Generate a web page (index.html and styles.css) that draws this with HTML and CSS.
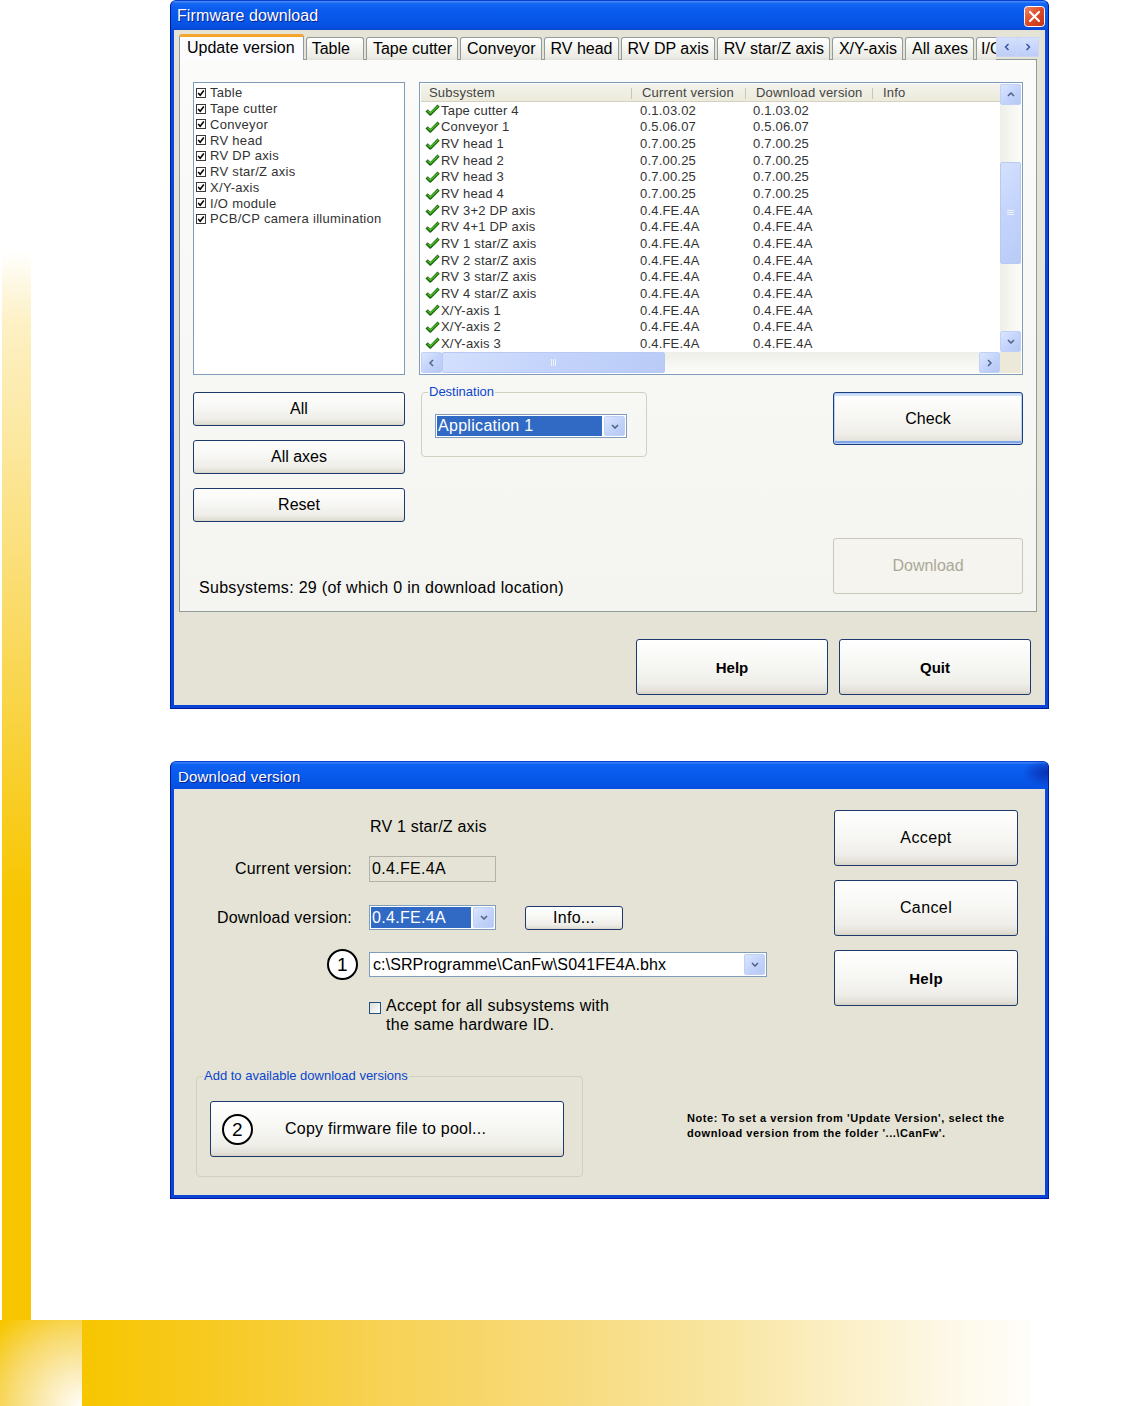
FILE: index.html
```html
<!DOCTYPE html>
<html>
<head>
<meta charset="utf-8">
<title>Firmware download</title>
<link rel="stylesheet" href="styles.css">
</head>
<body>
<div class="page">

  <div class="win win1">
    <div class="titlebar">
      <span class="title">Firmware download</span>
      <svg class="close" width="21" height="21" viewBox="0 0 21 21">
        <defs><linearGradient id="cg" x1="0" y1="0" x2="1" y2="1"><stop offset="0" stop-color="#f08a6a"/><stop offset="0.5" stop-color="#de4a26"/><stop offset="1" stop-color="#c03414"/></linearGradient></defs>
        <rect x="0.5" y="0.5" width="20" height="20" rx="3" fill="url(#cg)" stroke="#fff"/>
        <path d="M6 6 L15 15 M15 6 L6 15" stroke="#fff" stroke-width="2.2" stroke-linecap="round"/>
      </svg>
    </div>
    <div class="frame">
      <div class="body body1">
        <div class="tabs">
          <div class="tablist">
            <div class="tab active">Update version</div>
            <div class="tab tab-table">Table</div>
            <div class="tab">Tape cutter</div>
            <div class="tab">Conveyor</div>
            <div class="tab">RV head</div>
            <div class="tab">RV DP axis</div>
            <div class="tab">RV star/Z axis</div>
            <div class="tab">X/Y-axis</div>
            <div class="tab">All axes</div>
            <div class="tab tab-io">I/O</div>
          </div>
          <div class="tabscroll">
            <span class="ts-btn"><svg width="6" height="8" viewBox="0 0 6 8"><path d="M4.5 1 L1.5 4 L4.5 7" fill="none" stroke="#fff" stroke-width="1.4"/></svg></span>
            <span class="ts-btn"><svg width="6" height="8" viewBox="0 0 6 8"><path d="M1.5 1 L4.5 4 L1.5 7" fill="none" stroke="#fff" stroke-width="1.4"/></svg></span>
          </div>
        </div>

        <div class="panel">
          <div class="toprow">
            <div class="checklist">
              <div class="ci"><svg class="cb" viewBox="0 0 10 10"><rect x=".5" y=".5" width="9" height="9" fill="#fff" stroke="#3a3a3a"/><path d="M2.2 5 L4.2 7.2 L7.8 2.6" fill="none" stroke="#000" stroke-width="1.6"/></svg><span>Table</span></div>
              <div class="ci"><svg class="cb" viewBox="0 0 10 10"><rect x=".5" y=".5" width="9" height="9" fill="#fff" stroke="#3a3a3a"/><path d="M2.2 5 L4.2 7.2 L7.8 2.6" fill="none" stroke="#000" stroke-width="1.6"/></svg><span>Tape cutter</span></div>
              <div class="ci"><svg class="cb" viewBox="0 0 10 10"><rect x=".5" y=".5" width="9" height="9" fill="#fff" stroke="#3a3a3a"/><path d="M2.2 5 L4.2 7.2 L7.8 2.6" fill="none" stroke="#000" stroke-width="1.6"/></svg><span>Conveyor</span></div>
              <div class="ci"><svg class="cb" viewBox="0 0 10 10"><rect x=".5" y=".5" width="9" height="9" fill="#fff" stroke="#3a3a3a"/><path d="M2.2 5 L4.2 7.2 L7.8 2.6" fill="none" stroke="#000" stroke-width="1.6"/></svg><span>RV head</span></div>
              <div class="ci"><svg class="cb" viewBox="0 0 10 10"><rect x=".5" y=".5" width="9" height="9" fill="#fff" stroke="#3a3a3a"/><path d="M2.2 5 L4.2 7.2 L7.8 2.6" fill="none" stroke="#000" stroke-width="1.6"/></svg><span>RV DP axis</span></div>
              <div class="ci"><svg class="cb" viewBox="0 0 10 10"><rect x=".5" y=".5" width="9" height="9" fill="#fff" stroke="#3a3a3a"/><path d="M2.2 5 L4.2 7.2 L7.8 2.6" fill="none" stroke="#000" stroke-width="1.6"/></svg><span>RV star/Z axis</span></div>
              <div class="ci"><svg class="cb" viewBox="0 0 10 10"><rect x=".5" y=".5" width="9" height="9" fill="#fff" stroke="#3a3a3a"/><path d="M2.2 5 L4.2 7.2 L7.8 2.6" fill="none" stroke="#000" stroke-width="1.6"/></svg><span>X/Y-axis</span></div>
              <div class="ci"><svg class="cb" viewBox="0 0 10 10"><rect x=".5" y=".5" width="9" height="9" fill="#fff" stroke="#3a3a3a"/><path d="M2.2 5 L4.2 7.2 L7.8 2.6" fill="none" stroke="#000" stroke-width="1.6"/></svg><span>I/O module</span></div>
              <div class="ci"><svg class="cb" viewBox="0 0 10 10"><rect x=".5" y=".5" width="9" height="9" fill="#fff" stroke="#3a3a3a"/><path d="M2.2 5 L4.2 7.2 L7.8 2.6" fill="none" stroke="#000" stroke-width="1.6"/></svg><span>PCB/CP camera illumination</span></div>
            </div>

            <div class="listview">
              <div class="lv-content">
                <div class="lv-row lv-header"><div class="hc">Subsystem</div><div class="hc">Current version</div><div class="hc">Download version</div><div class="hc last">Info</div></div>
                <div class="lv-row"><div class="c1"><svg class="ok" viewBox="0 0 15 12"><path d="M1.6 6.4 L5.4 10 L13.6 1.6" fill="none" stroke="#1c6a10" stroke-width="3.2" stroke-linejoin="round"/><path d="M2.4 6.6 L5.4 9.2 L13 2.2" fill="none" stroke="#56c52c" stroke-width="1.1"/></svg>Tape cutter 4</div><div class="c2">0.1.03.02</div><div class="c3">0.1.03.02</div><div></div></div>
                <div class="lv-row"><div class="c1"><svg class="ok" viewBox="0 0 15 12"><path d="M1.6 6.4 L5.4 10 L13.6 1.6" fill="none" stroke="#1c6a10" stroke-width="3.2" stroke-linejoin="round"/><path d="M2.4 6.6 L5.4 9.2 L13 2.2" fill="none" stroke="#56c52c" stroke-width="1.1"/></svg>Conveyor 1</div><div class="c2">0.5.06.07</div><div class="c3">0.5.06.07</div><div></div></div>
                <div class="lv-row"><div class="c1"><svg class="ok" viewBox="0 0 15 12"><path d="M1.6 6.4 L5.4 10 L13.6 1.6" fill="none" stroke="#1c6a10" stroke-width="3.2" stroke-linejoin="round"/><path d="M2.4 6.6 L5.4 9.2 L13 2.2" fill="none" stroke="#56c52c" stroke-width="1.1"/></svg>RV head 1</div><div class="c2">0.7.00.25</div><div class="c3">0.7.00.25</div><div></div></div>
                <div class="lv-row"><div class="c1"><svg class="ok" viewBox="0 0 15 12"><path d="M1.6 6.4 L5.4 10 L13.6 1.6" fill="none" stroke="#1c6a10" stroke-width="3.2" stroke-linejoin="round"/><path d="M2.4 6.6 L5.4 9.2 L13 2.2" fill="none" stroke="#56c52c" stroke-width="1.1"/></svg>RV head 2</div><div class="c2">0.7.00.25</div><div class="c3">0.7.00.25</div><div></div></div>
                <div class="lv-row"><div class="c1"><svg class="ok" viewBox="0 0 15 12"><path d="M1.6 6.4 L5.4 10 L13.6 1.6" fill="none" stroke="#1c6a10" stroke-width="3.2" stroke-linejoin="round"/><path d="M2.4 6.6 L5.4 9.2 L13 2.2" fill="none" stroke="#56c52c" stroke-width="1.1"/></svg>RV head 3</div><div class="c2">0.7.00.25</div><div class="c3">0.7.00.25</div><div></div></div>
                <div class="lv-row"><div class="c1"><svg class="ok" viewBox="0 0 15 12"><path d="M1.6 6.4 L5.4 10 L13.6 1.6" fill="none" stroke="#1c6a10" stroke-width="3.2" stroke-linejoin="round"/><path d="M2.4 6.6 L5.4 9.2 L13 2.2" fill="none" stroke="#56c52c" stroke-width="1.1"/></svg>RV head 4</div><div class="c2">0.7.00.25</div><div class="c3">0.7.00.25</div><div></div></div>
                <div class="lv-row"><div class="c1"><svg class="ok" viewBox="0 0 15 12"><path d="M1.6 6.4 L5.4 10 L13.6 1.6" fill="none" stroke="#1c6a10" stroke-width="3.2" stroke-linejoin="round"/><path d="M2.4 6.6 L5.4 9.2 L13 2.2" fill="none" stroke="#56c52c" stroke-width="1.1"/></svg>RV 3+2 DP axis</div><div class="c2">0.4.FE.4A</div><div class="c3">0.4.FE.4A</div><div></div></div>
                <div class="lv-row"><div class="c1"><svg class="ok" viewBox="0 0 15 12"><path d="M1.6 6.4 L5.4 10 L13.6 1.6" fill="none" stroke="#1c6a10" stroke-width="3.2" stroke-linejoin="round"/><path d="M2.4 6.6 L5.4 9.2 L13 2.2" fill="none" stroke="#56c52c" stroke-width="1.1"/></svg>RV 4+1 DP axis</div><div class="c2">0.4.FE.4A</div><div class="c3">0.4.FE.4A</div><div></div></div>
                <div class="lv-row"><div class="c1"><svg class="ok" viewBox="0 0 15 12"><path d="M1.6 6.4 L5.4 10 L13.6 1.6" fill="none" stroke="#1c6a10" stroke-width="3.2" stroke-linejoin="round"/><path d="M2.4 6.6 L5.4 9.2 L13 2.2" fill="none" stroke="#56c52c" stroke-width="1.1"/></svg>RV 1 star/Z axis</div><div class="c2">0.4.FE.4A</div><div class="c3">0.4.FE.4A</div><div></div></div>
                <div class="lv-row"><div class="c1"><svg class="ok" viewBox="0 0 15 12"><path d="M1.6 6.4 L5.4 10 L13.6 1.6" fill="none" stroke="#1c6a10" stroke-width="3.2" stroke-linejoin="round"/><path d="M2.4 6.6 L5.4 9.2 L13 2.2" fill="none" stroke="#56c52c" stroke-width="1.1"/></svg>RV 2 star/Z axis</div><div class="c2">0.4.FE.4A</div><div class="c3">0.4.FE.4A</div><div></div></div>
                <div class="lv-row"><div class="c1"><svg class="ok" viewBox="0 0 15 12"><path d="M1.6 6.4 L5.4 10 L13.6 1.6" fill="none" stroke="#1c6a10" stroke-width="3.2" stroke-linejoin="round"/><path d="M2.4 6.6 L5.4 9.2 L13 2.2" fill="none" stroke="#56c52c" stroke-width="1.1"/></svg>RV 3 star/Z axis</div><div class="c2">0.4.FE.4A</div><div class="c3">0.4.FE.4A</div><div></div></div>
                <div class="lv-row"><div class="c1"><svg class="ok" viewBox="0 0 15 12"><path d="M1.6 6.4 L5.4 10 L13.6 1.6" fill="none" stroke="#1c6a10" stroke-width="3.2" stroke-linejoin="round"/><path d="M2.4 6.6 L5.4 9.2 L13 2.2" fill="none" stroke="#56c52c" stroke-width="1.1"/></svg>RV 4 star/Z axis</div><div class="c2">0.4.FE.4A</div><div class="c3">0.4.FE.4A</div><div></div></div>
                <div class="lv-row"><div class="c1"><svg class="ok" viewBox="0 0 15 12"><path d="M1.6 6.4 L5.4 10 L13.6 1.6" fill="none" stroke="#1c6a10" stroke-width="3.2" stroke-linejoin="round"/><path d="M2.4 6.6 L5.4 9.2 L13 2.2" fill="none" stroke="#56c52c" stroke-width="1.1"/></svg>X/Y-axis 1</div><div class="c2">0.4.FE.4A</div><div class="c3">0.4.FE.4A</div><div></div></div>
                <div class="lv-row"><div class="c1"><svg class="ok" viewBox="0 0 15 12"><path d="M1.6 6.4 L5.4 10 L13.6 1.6" fill="none" stroke="#1c6a10" stroke-width="3.2" stroke-linejoin="round"/><path d="M2.4 6.6 L5.4 9.2 L13 2.2" fill="none" stroke="#56c52c" stroke-width="1.1"/></svg>X/Y-axis 2</div><div class="c2">0.4.FE.4A</div><div class="c3">0.4.FE.4A</div><div></div></div>
                <div class="lv-row"><div class="c1"><svg class="ok" viewBox="0 0 15 12"><path d="M1.6 6.4 L5.4 10 L13.6 1.6" fill="none" stroke="#1c6a10" stroke-width="3.2" stroke-linejoin="round"/><path d="M2.4 6.6 L5.4 9.2 L13 2.2" fill="none" stroke="#56c52c" stroke-width="1.1"/></svg>X/Y-axis 3</div><div class="c2">0.4.FE.4A</div><div class="c3">0.4.FE.4A</div><div></div></div>
              </div>
              <div class="vscroll">
                <div class="sbtn"><svg width="8" height="5" viewBox="0 0 8 5"><path d="M1 4 L4 1 L7 4" fill="none" stroke="#4d6185" stroke-width="1.5"/></svg></div>
                <div class="strack v"><div class="thumb vthumb"><svg width="7" height="6" viewBox="0 0 7 6"><path d="M0 0.5 H7 M0 2.5 H7 M0 4.5 H7" stroke="#eef2fd" stroke-width="1"/></svg></div></div>
                <div class="sbtn"><svg width="8" height="5" viewBox="0 0 8 5"><path d="M1 1 L4 4 L7 1" fill="none" stroke="#4d6185" stroke-width="1.5"/></svg></div>
              </div>
              <div class="hscroll">
                <div class="sbtn"><svg width="5" height="8" viewBox="0 0 5 8"><path d="M4 1 L1 4 L4 7" fill="none" stroke="#4d6185" stroke-width="1.5"/></svg></div>
                <div class="strack h"><div class="thumb hthumb"><svg width="6" height="7" viewBox="0 0 6 7"><path d="M0.5 0 V7 M2.5 0 V7 M4.5 0 V7" stroke="#eef2fd" stroke-width="1"/></svg></div></div>
                <div class="sbtn"><svg width="5" height="8" viewBox="0 0 5 8"><path d="M1 1 L4 4 L1 7" fill="none" stroke="#4d6185" stroke-width="1.5"/></svg></div>
              </div>
              <div class="corner"></div>
            </div>
          </div>

          <div class="bottomrow">
            <div class="leftcol">
              <button class="btn b-side">All</button>
              <button class="btn b-side">All axes</button>
              <button class="btn b-side">Reset</button>
              <div class="status">Subsystems: 29 (of which 0 in download location)</div>
            </div>
            <fieldset class="group dest">
              <legend>Destination</legend>
              <div class="combo combo-app">
                <span class="sel">Application 1</span>
                <span class="cbtn"><svg width="8" height="5" viewBox="0 0 8 5"><path d="M1 1 L4 4 L7 1" fill="none" stroke="#4d6185" stroke-width="1.5"/></svg></span>
              </div>
            </fieldset>
            <div class="rightcol">
              <button class="btn btn-default b-check">Check</button>
              <button class="btn btn-disabled b-dl">Download</button>
            </div>
          </div>
        </div>

        <div class="footer">
          <button class="btn b-foot">Help</button>
          <button class="btn b-foot">Quit</button>
        </div>
      </div>
    </div>
  </div>

  <div class="win win2">
    <div class="titlebar tb2">
      <span class="title t2">Download version</span>
    </div>
    <div class="frame">
      <div class="body body2">
        <div class="top2">
          <div class="form">
            <div class="frow r-a"><span></span><span class="fval">RV 1 star/Z axis</span></div>
            <div class="frow r-b"><span class="flabel">Current version:</span><span class="field">0.4.FE.4A</span></div>
            <div class="frow r-c"><span class="flabel">Download version:</span>
              <span class="fgroup">
                <span class="combo combo-dv"><span class="sel">0.4.FE.4A</span><span class="cbtn"><svg width="8" height="5" viewBox="0 0 8 5"><path d="M1 1 L4 4 L7 1" fill="none" stroke="#4d6185" stroke-width="1.5"/></svg></span></span>
                <button class="btn b-info">Info...</button>
              </span>
            </div>
            <div class="frow r-d"><span class="circ c-one">1</span>
              <span class="combo combo-path"><span class="ptext">c:\SRProgramme\CanFw\S041FE4A.bhx</span><span class="cbtn"><svg width="8" height="5" viewBox="0 0 8 5"><path d="M1 1 L4 4 L7 1" fill="none" stroke="#4d6185" stroke-width="1.5"/></svg></span></span>
            </div>
            <div class="frow r-e"><span></span>
              <span class="acc"><span class="cb2"></span><span class="acctext">Accept for all subsystems with<br>the same hardware ID.</span></span>
            </div>
          </div>
          <div class="btncol">
            <button class="btn b-dlg">Accept</button>
            <button class="btn b-dlg">Cancel</button>
            <button class="btn b-dlg b-bold">Help</button>
          </div>
        </div>
        <div class="bottom2">
          <fieldset class="group pool">
            <legend>Add to available download versions</legend>
            <button class="btn b-pool"><span class="circ">2</span><span class="pooltext">Copy firmware file to pool...</span></button>
          </fieldset>
          <div class="note">Note: To set a version from 'Update Version', select the<br>download version from the folder '...\CanFw'.</div>
        </div>
      </div>
    </div>
  </div>

</div>
</body>
</html>
```

FILE: styles.css
```css
* { box-sizing: border-box; }
body { margin: 0; font-family: "Liberation Sans", Arial, sans-serif; color: #000; }

.page {
  width: 1134px;
  height: 1406px;
  padding-left: 170px;
  overflow: hidden;
  background:
    radial-gradient(circle at 100% 100%, #fffef8 0, #fbecb8 35px, #f8d968 75px, #f7c600 115px) 0 1320px / 82px 86px no-repeat,
    linear-gradient(to right, #f7c600 0, #f7ca22 14%, #f7d255 32%, #f8db7e 52%, #f9e6a3 68%, #fbefc6 80%, #fdf8e6 91%, #fffdfb 100%) 82px 1320px / 948px 86px no-repeat,
    linear-gradient(to bottom, #ffffff 0, #ffffff 250px, #fdf1c6 320px, #fadc6c 600px, #f7c600 900px) 2px 0 / 29px 1320px no-repeat,
    #ffffff;
}

/* ---------- window chrome ---------- */
.win {
  width: 879px;
  border: 1px solid #001b9e;
  border-top-color: #0b3fcf;
  border-radius: 6px 6px 0 0;
  background: #0a48dc;
  overflow: hidden;
}
.win2 { margin-top: 52px; }

.titlebar {
  height: 29px;
  display: flex;
  align-items: center;
  justify-content: space-between;
  padding: 1px 3px 0 6px;
  background: linear-gradient(#4a90fb 0, #1466f2 9%, #0a5cee 30%, #0757e9 60%, #0552e3 85%, #0546d2 100%);
}
.tb2 {
  height: 27px;
  padding-left: 7px;
  background:
    radial-gradient(ellipse 26px 14px at 100% 40%, #0a2fb0 0, rgba(10,47,176,0) 100%),
    linear-gradient(#3b86f8 0, #0f62f0 10%, #0a5cee 35%, #0757e9 65%, #0550e0 100%);
}
.title {
  color: #fff;
  font-size: 16px;
  text-shadow: 1px 1px 0 #0b1f90;
  letter-spacing: 0.1px;
}
.t2 { font-size: 15px; letter-spacing: 0.2px; }
.close { display: block; }

.frame {
  padding: 0 3px 3px;
  background: linear-gradient(to bottom, #0a4ade, #0944d6);
}
.body { background: #e4e3d5; }

/* ---------- window 1 ---------- */
.body1 {
  height: 675px;
  padding: 5px 8px 0 5px;
}

.tabs {
  display: flex;
  align-items: flex-end;
  height: 25px;
  margin-bottom: -1px;
}
.tablist {
  display: flex;
  align-items: flex-end;
  width: 817px;
  overflow: hidden;
  flex: none;
}
.tab {
  flex: none;
  height: 23px;
  padding: 0 5px 0 6px;
  margin-left: 2px;
  border: 1px solid #919b9c;
  border-bottom: 0;
  border-radius: 3px 3px 0 0;
  background: linear-gradient(#ffffff 0, #f6f6f2 40%, #ecebe5 85%, #e2e1da 100%);
  font-size: 16px;
  line-height: 22px;
  white-space: nowrap;
}
.tab.active {
  margin-left: 0;
  height: 26px;
  padding: 0 8px 0 7px;
  border-top: 3px solid #f4a62c;
  background: #fcfcfe;
  line-height: 22px;
  position: relative;
  z-index: 1;
}
.tab-table { padding: 0 13px 0 5px; }
.tab-io { width: 40px; padding: 0 0 0 4px; overflow: hidden; }
.tabscroll {
  flex: none;
  display: flex;
  width: 43px;
  height: 20px;
  margin-bottom: 3px;
  margin-right: -2px;
  padding: 1px;
  gap: 1px;
  background: #c9d5f7;
}
.ts-btn {
  flex: 1;
  display: flex;
  align-items: center;
  justify-content: center;
  background: linear-gradient(#d4e0fd, #bccdf6);
}
.ts-btn svg path { stroke: #2e4d9a; }

.panel {
  height: 553px;
  border: 1px solid #919b9c;
  background: linear-gradient(#fbfbf9, #f4f4f1);
  padding: 22px 13px 17px 13px;
  display: flex;
  flex-direction: column;
  gap: 17px;
}

.toprow {
  display: flex;
  gap: 14px;
  height: 293px;
}
.checklist {
  width: 212px;
  border: 1px solid #7f9db9;
  background: #fff;
  padding: 2px 0 0 2px;
}
.ci {
  display: flex;
  align-items: center;
  gap: 4px;
  height: 15.75px;
  font-size: 13px;
  letter-spacing: 0.3px;
  color: #333;
  white-space: nowrap;
}
.cb { width: 10px; height: 10px; flex: none; }

.listview {
  width: 604px;
  border: 1px solid #7f9db9;
  background: #fff;
  padding: 1px;
  display: grid;
  grid-template-columns: 579px 21px;
  grid-template-rows: 268px 21px;
}
.lv-content { overflow: hidden; }
.lv-row {
  display: grid;
  grid-template-columns: 211px 114px 127px 1fr;
  height: 16.65px;
  align-items: center;
  font-size: 13px;
  letter-spacing: 0.2px;
  color: #333;
  white-space: nowrap;
}
.lv-header {
  height: 18px;
  background: linear-gradient(#f4f3ec, #ebeadb);
  border-bottom: 1px solid #d5d2c1;
  color: #444;
}
.hc {
  padding-left: 10px;
  background: linear-gradient(#c9c6b4, #c9c6b4) no-repeat right 3px / 1px 11px;
}
.hc:first-child { padding-left: 8px; }
.hc.last { background: none; }
.c1 { display: flex; align-items: center; padding-left: 4px; }
.ok { width: 15px; height: 12px; margin-right: 1px; flex: none; }
.c2 { padding-left: 8px; }
.c3 { padding-left: 7px; }

.vscroll {
  display: flex;
  flex-direction: column;
  background: #f6f6f2;
}
.hscroll {
  display: flex;
  background: #f6f6f2;
}
.sbtn {
  flex: none;
  width: 21px;
  height: 21px;
  display: flex;
  align-items: center;
  justify-content: center;
  border: 1px solid #c1d0f5;
  border-radius: 2px;
  background: linear-gradient(135deg, #dbe6fe 0, #c4d4fb 50%, #b5c8f4 100%);
}
.strack { flex: 1; display: flex; }
.strack.v { flex-direction: column; background: linear-gradient(to right, #efefe9, #fbfbf8); }
.strack.h { background: linear-gradient(#efefe9, #fbfbf8); }
.thumb {
  display: flex;
  align-items: center;
  justify-content: center;
  border: 1px solid #b8c9f2;
  border-radius: 2px;
  background: linear-gradient(135deg, #d4e0fd 0, #c3d3fb 50%, #b9cbf6 100%);
}
.vthumb { margin-top: 57px; height: 102px; }
.hthumb { width: 223px; }
.corner { background: #ece9d8; }

.bottomrow {
  display: flex;
  height: 202px;
}
.leftcol {
  width: 212px;
  flex: none;
  display: flex;
  flex-direction: column;
  gap: 14px;
}
.status {
  margin-top: auto;
  margin-bottom: -3px;
  margin-left: 6px;
  font-size: 16px;
  letter-spacing: 0.3px;
  line-height: 18px;
  white-space: nowrap;
}

.btn {
  display: block;
  font-family: "Liberation Sans", Arial, sans-serif;
  font-size: 16px;
  color: #000;
  border: 1px solid #1e3a6c;
  border-radius: 3px;
  background: linear-gradient(#ffffff 0, #f7f7f4 45%, #efeee9 80%, #e3e1d8 94%, #d8d3c7 100%);
  padding: 0;
  cursor: default;
}
.b-side { width: 212px; height: 34px; }

.group {
  margin: 0;
  border: 1px solid #d0d0bf;
  border-radius: 4px;
}
.group legend {
  font-size: 13px;
  line-height: 16px;
  color: #0b46d0;
  padding: 0 1px;
  margin-left: -7px;
}
.dest {
  margin-left: 16px;
  margin-top: -8px;
  width: 226px;
  height: 73px;
  padding: 14px 13px 0 13px;
}
.combo {
  display: flex;
  border: 1px solid #7f9db9;
  background: #fff;
  padding: 1px;
}
.combo .sel {
  flex: 1;
  background: #316ac5;
  color: #fff;
  font-size: 16px;
  letter-spacing: 0.3px;
  line-height: 20px;
  padding-left: 1px;
  margin-right: 2px;
  white-space: nowrap;
}
.cbtn {
  flex: none;
  width: 21px;
  display: flex;
  align-items: center;
  justify-content: center;
  border: 1px solid #c1d0f5;
  border-radius: 2px;
  background: linear-gradient(135deg, #dbe6fe 0, #c4d4fb 50%, #b5c8f4 100%);
}
.combo-app { width: 192px; height: 24px; }

.rightcol {
  margin-left: auto;
  width: 190px;
  display: flex;
  flex-direction: column;
  justify-content: space-between;
}
.b-check {
  width: 190px;
  height: 53px;
}
.btn-default {
  border-color: #1a3d7c;
  box-shadow: inset 0 0 0 1px #b9d1f8, inset 0 -2px 0 1px #7ea4ea, inset 0 2px 0 1px #cfe0fb;
}
.b-dl {
  width: 190px;
  height: 56px;
}
.btn-disabled {
  border-color: #cac8bb;
  background: #f5f4ee;
  color: #aca899;
}

.footer {
  display: flex;
  justify-content: flex-end;
  gap: 11px;
  padding: 27px 6px 0 0;
}
.b-foot {
  width: 192px;
  height: 56px;
  font-size: 15px;
  font-weight: bold;
}

/* ---------- window 2 ---------- */
.body2 {
  height: 406px;
  padding: 21px 27px 0 0;
}
.top2 {
  display: flex;
  height: 224px;
}
.form {
  flex: 1;
  padding-top: 6px;
}
.frow {
  display: grid;
  grid-template-columns: 178px 1fr;
  column-gap: 17px;
  align-items: center;
  font-size: 16px;
  letter-spacing: 0.2px;
}
.flabel { text-align: right; white-space: nowrap; }
.r-a { height: 22px; }
.r-b { height: 26px; margin-top: 18px; }
.r-c { height: 25px; margin-top: 23px; }
.r-d { height: 32px; margin-top: 18px; }
.r-e { margin-top: 16px; align-items: start; }
.fval { padding-left: 1px; }
.field {
  width: 127px;
  height: 26px;
  border: 1px solid #b3b2a8;
  line-height: 23px;
  padding-left: 2px;
  letter-spacing: 0.3px;
}
.fgroup { display: flex; align-items: center; gap: 29px; }
.combo-dv { width: 127px; height: 25px; }
.combo-dv .sel { line-height: 21px; }
.b-info { width: 98px; height: 24px; letter-spacing: 0.3px; }

.circ {
  width: 31px;
  height: 31px;
  flex: none;
  border: 2px solid #000;
  border-radius: 50%;
  background: #fff;
  display: flex;
  align-items: center;
  justify-content: center;
  font-size: 19px;
  line-height: 1;
}
.c-one { justify-self: end; margin-right: -6px; }
.combo-path {
  width: 398px;
  height: 25px;
  align-items: stretch;
}
.ptext {
  flex: 1;
  font-size: 16px;
  line-height: 21px;
  padding-left: 2px;
  letter-spacing: 0.1px;
  white-space: nowrap;
}
.acc { display: flex; gap: 5px; }
.cb2 {
  width: 12px;
  height: 12px;
  flex: none;
  margin-top: 6px;
  border: 1px solid #1c5180;
  background: linear-gradient(135deg, #dcdcd7, #ffffff);
}
.acctext { line-height: 19px; letter-spacing: 0.3px; }

.btncol {
  width: 184px;
  flex: none;
  display: flex;
  flex-direction: column;
  gap: 14px;
}
.b-dlg {
  width: 184px;
  height: 56px;
  letter-spacing: 0.4px;
}
.b-bold { font-weight: bold; font-size: 15px; letter-spacing: 0.3px; }

.bottom2 {
  display: flex;
  align-items: flex-start;
  margin-top: 34px;
}
.pool {
  margin-left: 22px;
  width: 387px;
  padding: 17px 18px 19px 13px;
}
.b-pool {
  width: 354px;
  height: 56px;
  display: flex;
  align-items: center;
  padding-left: 11px;
  gap: 32px;
  letter-spacing: 0.25px;
  text-align: left;
}
.note {
  margin-left: 104px;
  margin-top: 43px;
  font-size: 11px;
  font-weight: bold;
  letter-spacing: 0.55px;
  line-height: 15px;
  white-space: nowrap;
}
```
